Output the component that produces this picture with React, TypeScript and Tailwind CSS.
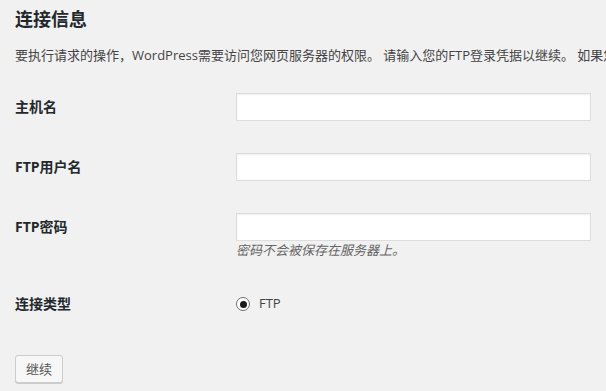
const FONT = "font-['Open_Sans','Noto_Sans_CJK_SC',sans-serif]";

function TextField() {
  return (
    <input
      type="text"
      className="block h-[28px] w-[355px] border border-[#ddd] bg-white px-[5px] text-[14px] text-[#32373c] shadow-[inset_0_1px_2px_rgba(0,0,0,0.07)] outline-none"
    />
  );
}

function Row({
  label,
  children,
  labelPad = "pt-[19px]",
}: {
  label: string;
  children: React.ReactNode;
  labelPad?: string;
}) {
  return (
    <div className="grid grid-cols-[221px_1fr]">
      <div className={`${labelPad} text-[14px] font-bold leading-[20px] text-[#23282d]`}>
        {label}
      </div>
      <div>{children}</div>
    </div>
  );
}

export default function App() {
  return (
    <div className={`${FONT} min-h-[391px] w-full overflow-hidden bg-[#f1f1f1] px-[15px] text-[#444]`}>
      <h3 className="mt-[7px] text-[18px] font-bold leading-[24px] text-[#23282d]">
        连接信息
      </h3>
      <p className="mt-[14px] whitespace-nowrap text-[13px] leading-[20px]">
        要执行请求的操作，WordPress需要访问您网页服务器的权限。 请输入您的FTP登录凭据以继续。
        如果您忘记了您的登录凭据（如用户名、密码），请联系您的网站托管商。
      </p>

      <div className="mt-[13px]">
        <Row label="主机名">
          <div className="h-[60px] pt-[15px]">
            <TextField />
          </div>
        </Row>
        <Row label="FTP用户名">
          <div className="h-[60px] pt-[15px]">
            <TextField />
          </div>
        </Row>
        <Row label="FTP密码">
          <div className="pb-[15px] pt-[15px]">
            <TextField />
            <p className="text-[13px] italic leading-[18px] text-[#666]">
              密码不会被保存在服务器上。
            </p>
          </div>
        </Row>
        <Row label="连接类型" labelPad="pt-[20px]">
          <div className="flex h-[60px] items-start pt-[20px]">
            <label className="flex h-[20px] items-center gap-[9px] text-[13px] text-[#444]">
              <span className="flex h-[14px] w-[14px] items-center justify-center rounded-full border border-[#6d6d6d] bg-white">
                <span className="h-[7px] w-[7px] rounded-full bg-[#1a1a1a]" />
              </span>
              FTP
            </label>
          </div>
        </Row>
      </div>

      <div className="pt-[21px] pb-[8px]">
        <button className="h-[28px] rounded-[3px] border border-[#ccc] bg-[#f7f7f7] px-[10px] text-[13px] leading-[26px] text-[#555] shadow-[0_1px_0_#ccc]">
          继续
        </button>
      </div>
    </div>
  );
}
